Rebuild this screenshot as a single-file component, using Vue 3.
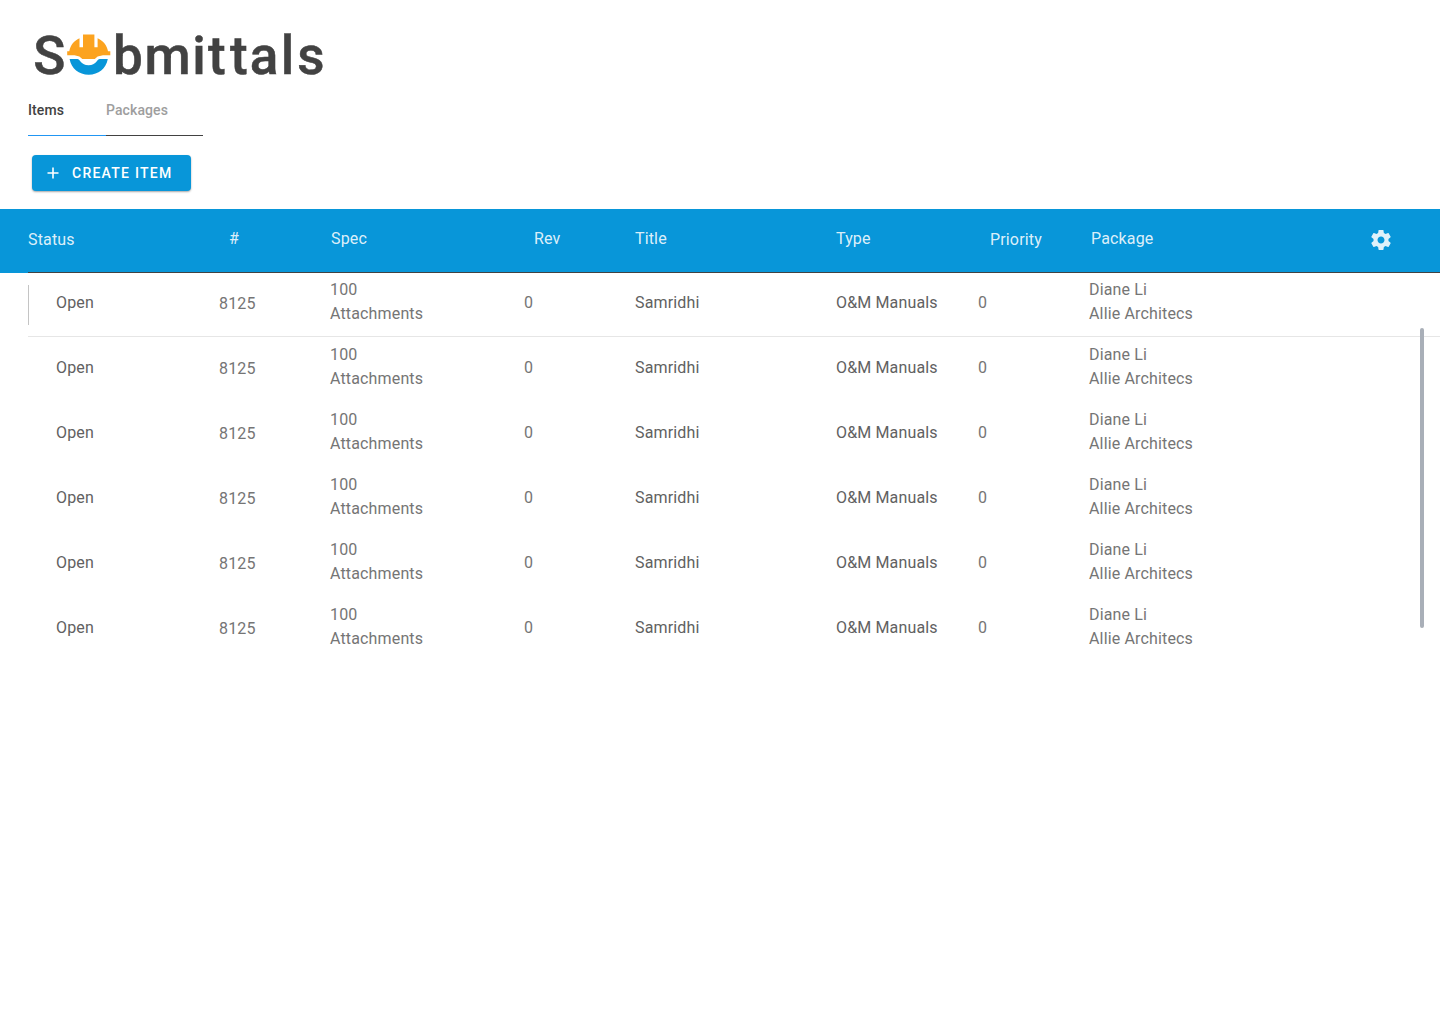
<script setup>
import { ref } from 'vue'

const tabs = ['Items', 'Packages']
const active = ref('Items')

const columns = [
  { key: 'status', label: 'Status' },
  { key: 'number', label: '#' },
  { key: 'spec', label: 'Spec' },
  { key: 'rev', label: 'Rev' },
  { key: 'title', label: 'Title' },
  { key: 'type', label: 'Type' },
  { key: 'priority', label: 'Priority' },
  { key: 'package', label: 'Package' },
]

const rows = Array.from({ length: 6 }, (_, id) => ({
  id,
  status: ['Open'],
  number: ['8125'],
  spec: ['100', 'Attachments'],
  rev: ['0'],
  title: ['Samridhi'],
  type: ['O&M Manuals'],
  priority: ['0'],
  package: ['Diane Li', 'Allie Architecs'],
}))
</script>

<template>
  <main class="page">
    <header class="brand">
      <svg class="logo" width="300" height="70" viewBox="30 20 300 70" role="img" aria-label="Submittals">
        <text x="33.2" y="74">S</text>
        <path fill="#fca31f" d="M83 34.6h11.4v12.7H97.600V38.200C103 40.600 106.900 45 108 51.300H110.300V55.200H103L97.600 56.400L94.800 59H82.300L79.400 56.400L74.500 55.200H67.200V51.300H69.300C70.300 45 74.200 40.600 79.500 38.200V47.300H83Z" />
        <path fill="#0896d9" d="M69.600 59H77.300C80.300 59.200 80.800 65.300 88.600 65.300S96.800 59.200 99.800 59H107.800C106 68.500 98.500 74.700 88.700 74.700S71.300 68.500 69.600 59Z" />
        <text x="112.900 144.600 192.200 208 230 249.700 280.700 297.300" y="74">bmittals</text>
      </svg>
    </header>

    <nav class="tabs">
      <button
        v-for="tab in tabs"
        :key="tab"
        class="tab"
        :class="{ active: tab === active }"
        @click="active = tab"
      >{{ tab }}</button>
    </nav>

    <button class="create">
      <svg width="12" height="12" viewBox="0 0 12 12"><path d="M6 .5v11M.5 6h11" stroke="#fff" stroke-width="1.600" /></svg>
      <span>CREATE ITEM</span>
    </button>

    <section class="table">
      <div class="head grid">
        <div v-for="col in columns" :key="col.key" class="cell" :class="col.key">{{ col.label }}</div>
        <svg class="gear" width="24" height="24" viewBox="0 0 24 24">
          <path d="M19.430 12.980c.040-.320.070-.640.070-.980s-.030-.660-.070-.980l2.110-1.650c.190-.150.240-.420.120-.640l-2-3.460c-.120-.220-.390-.300-.610-.220l-2.490 1c-.520-.400-1.080-.730-1.690-.980l-.380-2.650C14.460 2.180 14.250 2 14 2h-4c-.250 0-.460.180-.490.420l-.380 2.650c-.610.250-1.170.590-1.690.980l-2.490-1c-.230-.090-.490 0-.610.220l-2 3.460c-.130.220-.070.490.120.640l2.110 1.650c-.040.320-.070.650-.070.980s.030.660.070.980l-2.110 1.650c-.190.150-.240.420-.120.640l2 3.460c.120.220.390.300.610.220l2.490-1c.520.400 1.080.730 1.690.980l.380 2.650c.030.240.240.420.490.420h4c.250 0 .460-.180.490-.420l.380-2.650c.610-.250 1.170-.590 1.690-.980l2.490 1c.230.090.490 0 .610-.220l2-3.460c.120-.220.070-.490-.120-.640l-2.110-1.650zM12 15.500c-1.930 0-3.500-1.570-3.500-3.500s1.570-3.500 3.500-3.500 3.500 1.570 3.500 3.500-1.570 3.500-3.500 3.500z" />
        </svg>
      </div>
      <div class="body">
        <div v-for="row in rows" :key="row.id" class="row grid">
          <div v-for="col in columns" :key="col.key" class="cell" :class="col.key">
            <div v-for="line in row[col.key]" :key="line">{{ line }}</div>
          </div>
        </div>
      </div>
      <div class="scrollbar"></div>
    </section>
  </main>
</template>

<style>
body {
  margin: 0;
  background: #fff;
}
</style>

<style scoped>
.page {
  height: 1024px;
  overflow: hidden;
  font-family: Roboto, sans-serif;
}
button {
  border: 0;
  background: none;
  font-family: inherit;
  cursor: pointer;
}
.brand {
  height: 70px;
  padding: 20px 0 0 30px;
}
.logo {
  display: block;
  fill: #424242;
  font-size: 53px;
  font-weight: 500;
}
.logo text {
  stroke: #424242;
  stroke-width: 0.5px;
}
.tabs {
  display: flex;
  height: 46px;
  margin-left: 28px;
}
.tab {
  width: 97px;
  padding: 8px 0 13px;
  border-bottom: 1px solid #424242;
  color: #9e9e9e;
  font-size: 14px;
  font-weight: 500;
  line-height: 24px;
  text-align: left;
  letter-spacing: 0.1px;
}
.tab.active {
  width: 78px;
  border-color: #2196f3;
  color: #424242;
}
.create {
  display: flex;
  align-items: center;
  gap: 13px;
  width: 159px;
  height: 36px;
  margin: 19px 0 18px 32px;
  padding: 0 0 0 15px;
  border-radius: 4px;
  background: #0896d9;
  box-shadow: 0 1px 2px rgba(0, 0, 0, 0.35);
  color: #fff;
  font-size: 14px;
  font-weight: 500;
  line-height: 16px;
  letter-spacing: 1.25px;
  white-space: nowrap;
}
.table {
  position: relative;
}
.grid {
  display: grid;
  grid-template-columns: 191px 111px 194px 111px 201px 142px 111px 1fr 60px;
  padding-left: 28px;
}
.cell {
  font-size: 16px;
  line-height: 24px;
  letter-spacing: 0.15px;
  white-space: nowrap;
}
.head {
  position: relative;
  height: 64px;
  background: #0896d9;
  color: rgba(255, 255, 255, 0.87);
}
.head::after {
  content: '';
  position: absolute;
  right: 0;
  bottom: 0;
  left: 28px;
  height: 1px;
  background: #424242;
}
.head .cell {
  padding-top: 18px;
}
.head .status,
.head .priority {
  padding-top: 19px;
}
.head .number,
.head .rev {
  padding-left: 10px;
}
.head .spec {
  padding-left: 1px;
}
.head .priority {
  padding-left: 12px;
}
.head .package {
  padding-left: 2px;
}
.gear {
  margin: 19px 0 0 -11px;
  fill: rgba(255, 255, 255, 0.87);
}
.body {
  margin-top: -1px;
}
.row {
  position: relative;
  height: 65px;
  color: #757575;
}
.row .cell {
  padding-top: 19px;
}
.row .number {
  padding-top: 20px;
}
.row .spec,
.row .package {
  padding-top: 6px;
}
.row .status {
  padding-left: 28px;
}
.row .status,
.row .title,
.row .type {
  color: #616161;
}
.row:first-child::before {
  content: '';
  position: absolute;
  top: 13px;
  left: 28px;
  width: 1px;
  height: 40px;
  background: #c4c4c4;
}
.row:first-child::after {
  content: '';
  position: absolute;
  right: 0;
  bottom: 0;
  left: 28px;
  height: 1px;
  background: #e6e6e6;
}
.scrollbar {
  position: absolute;
  top: 119px;
  right: 16px;
  width: 4px;
  height: 300px;
  border-radius: 2px;
  background: #a9afb8;
}
</style>
